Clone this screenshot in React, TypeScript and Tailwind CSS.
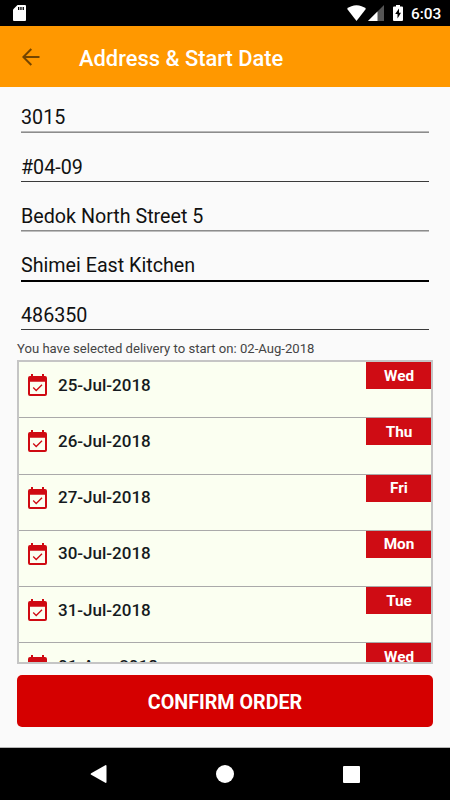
import clsx from 'clsx'

const fields = [
  { value: '3015', row: 'h-[46px]', line: 'h-0.5 border-t border-[#b8b8b8] bg-[#8c8c8c]' },
  { value: '#04-09', row: 'h-[49px]', line: 'h-px bg-[#3a3a3a]' },
  { value: 'Bedok North Street 5', row: 'h-[50px]', line: 'h-0.5 border-t border-[#8c8c8c] bg-[#bdbdbd]' },
  { value: 'Shimei East Kitchen', row: 'h-[50px]', line: 'mt-px h-0.5 bg-black' },
  { value: '486350', row: 'h-[48px]', line: 'h-px bg-[#3a3a3a]' },
]

const deliveries = [
  { date: '25-Jul-2018', day: 'Wed' },
  { date: '26-Jul-2018', day: 'Thu' },
  { date: '27-Jul-2018', day: 'Fri' },
  { date: '30-Jul-2018', day: 'Mon' },
  { date: '31-Jul-2018', day: 'Tue' },
  { date: '01-Aug-2018', day: 'Wed' },
]

function CalendarIcon() {
  return (
    <svg className="h-[22px] w-[19px] shrink-0" viewBox="0 0 19 22" fill="none">
      <path
        fill="#cf0a12"
        fillRule="evenodd"
        d="M3 0h2v2h9V0h2v2h1a2 2 0 0 1 2 2v16a2 2 0 0 1-2 2H2a2 2 0 0 1-2-2V4a2 2 0 0 1 2-2h1zM2 7.700V20h15V7.700z"
      />
      <path d="M5.200 13.500l3 3 5.800-5.800" stroke="#cf0a12" strokeWidth="1.300" />
    </svg>
  )
}

function StatusBar() {
  return (
    <div className="flex h-[26px] shrink-0 items-center bg-black pl-[13px] pr-[9px]">
      <svg className="h-4 w-[13px]" viewBox="0 0 13 16">
        <path fill="#fff" d="M4.500 0H12a1 1 0 0 1 1 1v14a1 1 0 0 1-1 1H1a1 1 0 0 1-1-1V4.500z" />
        <path fill="#000" d="M5 2h1.300v3H5zM7.300 2h1.300v3H7.300zM9.600 2h1.300v3H9.600z" />
      </svg>
      <div className="ml-auto flex items-center">
        <svg className="h-4 w-[19px]" viewBox="0 0 20 16" preserveAspectRatio="none">
          <path fill="#fff" d="M0 3.700C5.500-1 14.500-1 20 3.700L10 16z" />
        </svg>
        <svg className="ml-[2px] h-4 w-4" viewBox="0 0 16 16">
          <path fill="#555" d="M16 0v16H0z" />
          <path fill="#fff" d="M9.500 6.500V16H0z" />
        </svg>
        <svg className="ml-[9px] h-4 w-[10px]" viewBox="0 0 10 16">
          <path fill="#fff" d="M3 0h4v1.500h2a1 1 0 0 1 1 1V15a1 1 0 0 1-1 1H1a1 1 0 0 1-1-1V2.500a1 1 0 0 1 1-1h2z" />
          <path fill="#000" d="M6 3.500L2.200 9h2.300v4.500L8 7.700H6z" />
        </svg>
        <span className="ml-[8px] mt-[3px] w-[30px] text-[15.400px] font-medium leading-none text-white">6:03</span>
      </div>
    </div>
  )
}

export default function App() {
  return (
    <div className="flex h-[800px] w-[450px] flex-col overflow-hidden bg-[#fafafa] font-[Roboto,sans-serif]">
      <StatusBar />

      {/* App bar */}
      <header className="flex h-[61px] shrink-0 items-center bg-[#ff9800] pl-[22px]">
        <svg className="h-[18px] w-[18px]" viewBox="0 0 18 18" fill="none" stroke="#744500" strokeWidth="2">
          <path d="M17.500 9H1.500M9.300 1L1.300 9l8 8" />
        </svg>
        <h1 className="ml-[39px] mt-[4px] text-[21.900px] font-medium leading-none text-white">
          Address &amp; Start Date
        </h1>
      </header>

      {/* Address fields */}
      <main className="flex flex-1 flex-col border-b border-[#b5b5b5] px-[17px]">
        <div className="px-1">
          {fields.map((field) => (
            <div key={field.value} className={clsx('flex flex-col', field.row)}>
              <div className="flex flex-1 items-end pb-[2px] text-[19.700px] leading-[23px] text-[#111]">
                {field.value}
              </div>
              <div className={clsx('shrink-0', field.line)} />
            </div>
          ))}
        </div>

        <p className="mt-[10px] text-[13.100px] leading-[18px] text-[#444]">
          You have selected delivery to start on: 02-Aug-2018
        </p>

        {/* Delivery dates */}
        <div className="mt-[2px] h-[304px] shrink-0 overflow-hidden border-2 border-[#c5c5c5] bg-[#fbfff1]">
          {deliveries.map((d) => (
            <div key={d.date} className="flex h-[56.250px] items-start border-b border-[#aaa] pl-[9px]">
              <div className="mt-[12px]">
                <CalendarIcon />
              </div>
              <span className="ml-[11px] mt-[11.600px] text-[17px] font-medium leading-[23px] text-[#151a20]">
                {d.date}
              </span>
              <span className="ml-auto flex h-[27px] w-[65px] items-center justify-center bg-[#cf0c14] pl-px pt-px text-[15.300px] font-bold text-white">
                {d.day}
              </span>
            </div>
          ))}
        </div>

        <button className="mt-[11px] h-[52px] shrink-0 rounded-[5px] bg-[#d50000] pt-[3px] text-[19.700px] font-bold text-white">
          CONFIRM ORDER
        </button>
      </main>

      {/* Navigation bar */}
      <nav className="flex h-[52px] shrink-0 items-center bg-black pl-[90px]">
        <svg className="h-[18px] w-[17px]" viewBox="0 0 17 18">
          <path fill="#fff" d="M1.200 8.200L15.300.2q1.200-.4 1.200.9v15.800q0 1.300-1.200.9L1.200 9.800q-1.200-.8 0-1.600z" />
        </svg>
        <div className="ml-[109px] h-[18px] w-[18px] rounded-full bg-white" />
        <div className="ml-[109px] h-[17px] w-[17px] rounded-[1px] bg-white" />
      </nav>
    </div>
  )
}
